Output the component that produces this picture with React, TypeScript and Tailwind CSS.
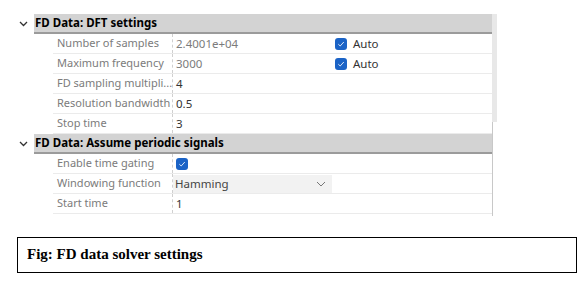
import React from "react";

const Check = () => (
  <span className="inline-flex w-[12px] h-[12px] rounded-[3px] bg-[#1b63c6] items-center justify-center">
    <svg width="8" height="8" viewBox="0 0 8 8" fill="none">
      <path d="M1.3 4.2 L3.2 6 L6.8 2" stroke="#d8e6f7" strokeWidth="1" />
    </svg>
  </span>
);

const Chevron = () => (
  <svg width="9" height="6" viewBox="0 0 9 6" fill="none">
    <path d="M1 1 L4.5 4.5 L8 1" stroke="#333" strokeWidth="1.3" />
  </svg>
);

type Row = { label: string; value?: React.ReactNode; dim?: boolean; auto?: boolean; select?: boolean };

const Header = ({ title }: { title: string }) => (
  <div className="flex h-[20px]">
    <div className="w-[34px] flex items-center justify-end pr-[6px]">
      <Chevron />
    </div>
    <div className="flex-1 bg-[#d3d3d3] border-b-2 border-[#9b9b9b] flex items-center pl-[1px] font-bold text-[11.5px] text-black">
      {title}
    </div>
  </div>
);

const RowView = ({ r }: { r: Row }) => (
  <div className="flex h-[20px] ml-[53px] border-b border-[#ebebeb]">
    <div className="w-[120px] flex items-center pl-[4px] text-[11px] text-[#7b7b7b] border-r border-dashed border-[#d0d0d0] whitespace-nowrap overflow-hidden">
      {r.label}
    </div>
    {r.select ? (
      <div className="flex-1 flex">
        <div className="w-[159px] bg-[#f2f2f2] flex items-center pl-[2px] text-[#444] justify-between pr-[6px] mt-[1px]">
          <span>Hamming</span>
          <svg width="10" height="6" viewBox="0 0 10 6" fill="none">
            <path d="M1 1 L5 5 L9 1" stroke="#777" strokeWidth="1" />
          </svg>
        </div>
      </div>
    ) : (
      <div className="flex-1 flex items-center pl-[3px]">
        <div className={`w-[159px] ${r.dim ? "text-[#7b7b7b]" : "text-[#333]"}`}>{r.value}</div>
        {r.auto && (
          <div className="flex items-center gap-[6px] text-[#333]">
            <Check />
            <span>Auto</span>
          </div>
        )}
      </div>
    )}
  </div>
);

export default function App() {
  const s1: Row[] = [
    { label: "Number of samples", value: "2.4001e+04", dim: true, auto: true },
    { label: "Maximum frequency", value: "3000", dim: true, auto: true },
    { label: "FD sampling multipli...", value: "4" },
    { label: "Resolution bandwidth", value: "0.5" },
    { label: "Stop time", value: "3" },
  ];
  const s2: Row[] = [
    { label: "Enable time gating", value: <span className="inline-flex mt-[2px]"><Check /></span> },
    { label: "Windowing function", select: true },
    { label: "Start time", value: "1" },
  ];
  return (
    <div className="w-[587px] h-[285px] bg-white relative" style={{ fontFamily: '"Noto Sans", sans-serif' }}>
      <div className="pt-[14px] flex text-[11.5px]">
        <div className="w-[492px]">
          <Header title="FD Data: DFT settings" />
          {s1.map((r) => (
            <RowView key={r.label} r={r} />
          ))}
          <Header title="FD Data: Assume periodic signals" />
          {s2.map((r) => (
            <RowView key={r.label} r={r} />
          ))}
        </div>
        <div className="w-[5px] flex flex-col">
          <div className="h-[108px] bg-[#e8e8e8]" />
          <div className="h-[94px] border-l border-[#c8c8c8]" />
        </div>
      </div>
      <div className="mt-[21px] ml-[17px] w-[560px] h-[36px] border-[1.5px] border-black flex items-center pl-[9px] pb-[2px]">
        <span className="font-bold text-[15px] text-black" style={{ fontFamily: '"Liberation Serif", serif' }}>
          Fig: FD data solver settings
        </span>
      </div>
    </div>
  );
}
